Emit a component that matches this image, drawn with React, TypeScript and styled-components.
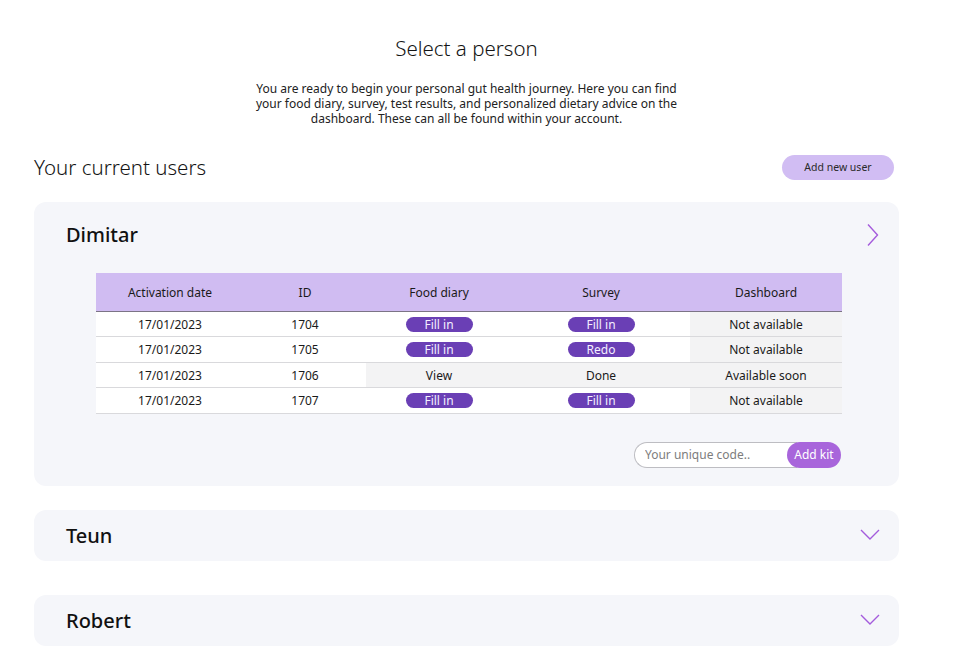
import React from "react";
import styled, { createGlobalStyle } from "styled-components";

const Global = createGlobalStyle`
  html, body { margin: 0; padding: 0; background: #ffffff; }
  body { font-family: "Noto Sans", "Open Sans", sans-serif; color: #141414; }
  * { box-sizing: border-box; }
`;

const Page = styled.div`
  width: 865px;
  margin: 0 0 0 34px;
  padding-top: 34px;
  display: flex;
  flex-direction: column;
`;

const Title = styled.h1`
  margin: 0;
  text-align: center;
  font-size: 20.5px;
  font-weight: 300;
  line-height: 28px;
`;

const Intro = styled.p`
  margin: 20px auto 0;
  width: 440px;
  text-align: center;
  font-size: 12px;
  font-weight: 400;
  line-height: 14.8px;
  color: #222;
`;

const HeaderRow = styled.div`
  margin-top: 27px;
  display: flex;
  align-items: center;
  justify-content: space-between;
  padding-right: 5px;
`;

const Subtitle = styled.h2`
  margin: 0;
  font-size: 20.5px;
  font-weight: 300;
  line-height: 28px;
`;

const PillButton = styled.button`
  height: 25px;
  width: 112px;
  border: none;
  border-radius: 13px;
  background: #d1bdf3;
  color: #2a2a2a;
  font-family: inherit;
  font-size: 10.5px;
  padding: 0;
`;

const Card = styled.section<{ $gap: number }>`
  margin-top: ${(p) => p.$gap}px;
  background: #f5f6fa;
  border-radius: 12px;
  padding: 0 19px 0 32px;
`;

const CardHeader = styled.div<{ $h: number }>`
  height: ${(p) => p.$h}px;
  display: flex;
  align-items: center;
  justify-content: space-between;
`;

const Name = styled.h3`
  margin: 0;
  font-size: 20px;
  font-weight: 500;
  color: #111;
`;

const Body = styled.div`
  padding: 6px 39px 18px 30px;
  display: flex;
  flex-direction: column;
`;

const Table = styled.table`
  width: 746px;
  border-collapse: collapse;
  font-size: 12px;
  color: #1a1a1a;
`;

const Th = styled.th<{ $w: number }>`
  width: ${(p) => p.$w}px;
  height: 38px;
  background: #d0bcf2;
  font-weight: 400;
  font-size: 12px;
  text-align: center;
  border-bottom: 1px solid #7c7486;
  padding: 0;
`;

const Tr = styled.tr`
  border-bottom: 1px solid #d9d9dc;
`;

const Td = styled.td<{ $grey?: boolean }>`
  height: 25.5px;
  padding: 0;
  text-align: center;
  background: ${(p) => (p.$grey ? "#f3f3f4" : "#ffffff")};
`;

const Action = styled.span`
  display: inline-block;
  width: 67px;
  height: 15px;
  line-height: 15px;
  border-radius: 8px;
  background: #6a3fb5;
  color: #f4efff;
  font-size: 12px;
`;

const KitRow = styled.div`
  margin-top: 28px;
  align-self: flex-end;
  display: flex;
  height: 26px;
  width: 207px;
`;

const CodeInput = styled.input`
  flex: 1;
  min-width: 0;
  height: 26px;
  border: 1px solid #bdbdc2;
  border-right: none;
  border-radius: 13px 0 0 13px;
  background: #fff;
  padding: 0 10px;
  font-family: inherit;
  font-size: 12px;
  color: #333;
  outline: none;
  &::placeholder { color: #7d7d7d; }
`;

const KitButton = styled.button`
  width: 54px;
  height: 26px;
  margin-left: -10px;
  border: none;
  border-radius: 13px;
  background: #a865db;
  color: #fff;
  font-family: inherit;
  font-size: 12px;
  padding: 0;
`;

const ChevronRight = () => (
  <svg width="14" height="24" viewBox="0 0 14 24" fill="none">
    <path d="M2 1.5 L11.5 12 L2 22.5" stroke="#a45bdc" strokeWidth="1.4" />
  </svg>
);

const ChevronDown = () => (
  <svg width="20" height="12" viewBox="0 0 20 12" fill="none">
    <path d="M1 1 L10 10 L19 1" stroke="#a45bdc" strokeWidth="1.4" />
  </svg>
);

type Cell = { kind: "btn"; label: string } | { kind: "text"; label: string };

const rows: { date: string; id: string; food: Cell; survey: Cell; dash: string }[] = [
  { date: "17/01/2023", id: "1704", food: { kind: "btn", label: "Fill in" }, survey: { kind: "btn", label: "Fill in" }, dash: "Not available" },
  { date: "17/01/2023", id: "1705", food: { kind: "btn", label: "Fill in" }, survey: { kind: "btn", label: "Redo" }, dash: "Not available" },
  { date: "17/01/2023", id: "1706", food: { kind: "text", label: "View" }, survey: { kind: "text", label: "Done" }, dash: "Available soon" },
  { date: "17/01/2023", id: "1707", food: { kind: "btn", label: "Fill in" }, survey: { kind: "btn", label: "Fill in" }, dash: "Not available" },
];

const renderCell = (c: Cell) =>
  c.kind === "btn" ? <Action>{c.label}</Action> : c.label;

export default function App() {
  return (
    <>
      <Global />
      <Page>
        <Title>Select a person</Title>
        <Intro>
          You are ready to begin your personal gut health journey. Here you can find your food diary,
          survey, test results, and personalized dietary advice on the dashboard. These can all be
          found within your account.
        </Intro>
        <HeaderRow>
          <Subtitle>Your current users</Subtitle>
          <PillButton>Add new user</PillButton>
        </HeaderRow>

        <Card $gap={21}>
          <CardHeader $h={65}>
            <Name>Dimitar</Name>
            <ChevronRight />
          </CardHeader>
          <Body>
            <Table>
              <thead>
                <tr>
                  <Th $w={148}>Activation date</Th>
                  <Th $w={122}>ID</Th>
                  <Th $w={146}>Food diary</Th>
                  <Th $w={178}>Survey</Th>
                  <Th $w={152}>Dashboard</Th>
                </tr>
              </thead>
              <tbody>
                {rows.map((r) => {
                  const g = r.food.kind === "text";
                  return (
                    <Tr key={r.id}>
                      <Td>{r.date}</Td>
                      <Td>{r.id}</Td>
                      <Td $grey={g}>{renderCell(r.food)}</Td>
                      <Td $grey={g}>{renderCell(r.survey)}</Td>
                      <Td $grey>{r.dash}</Td>
                    </Tr>
                  );
                })}
              </tbody>
            </Table>
            <KitRow>
              <CodeInput placeholder="Your unique code.." />
              <KitButton>Add kit</KitButton>
            </KitRow>
          </Body>
        </Card>

        <Card $gap={24}>
          <CardHeader $h={51}>
            <Name>Teun</Name>
            <ChevronDown />
          </CardHeader>
        </Card>

        <Card $gap={34}>
          <CardHeader $h={51}>
            <Name>Robert</Name>
            <ChevronDown />
          </CardHeader>
        </Card>
      </Page>
    </>
  );
}
